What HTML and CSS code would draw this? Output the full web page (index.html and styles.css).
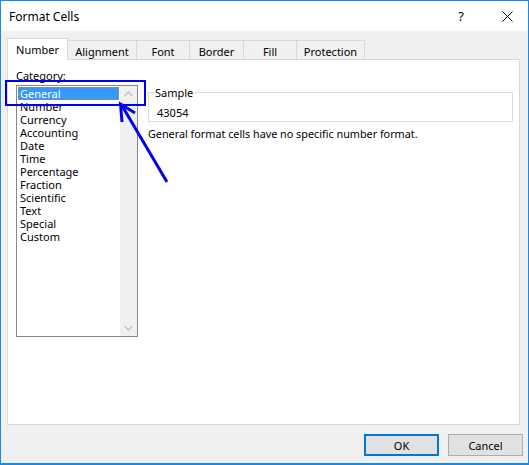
FILE: index.html
```html
<!DOCTYPE html>
<html>
<head>
<meta charset="utf-8">
<link rel="stylesheet" href="styles.css">
</head>
<body>
<div class="window">
  <div class="titlebar">
    <span class="title">Format Cells</span>
    <span class="help">?</span>
    <svg class="close" width="11" height="11" viewBox="0 0 11 11"><path d="M0.5 0.5 L10.5 10.5 M10.5 0.5 L0.5 10.5" stroke="#000" stroke-width="1" fill="none"/></svg>
  </div>
  <div class="body">
    <div class="tabs">
      <div class="tab active w-number">Number</div>
      <div class="tab w-align">Alignment</div>
      <div class="tab w-font">Font</div>
      <div class="tab w-border">Border</div>
      <div class="tab w-fill">Fill</div>
      <div class="tab w-prot">Protection</div>
    </div>
    <div class="panel">
      <div class="leftcol">
        <div class="label"><u>C</u>ategory:</div>
        <div class="listbox">
          <div class="items">
            <div class="item selected">General</div>
            <div class="item">Number</div>
            <div class="item">Currency</div>
            <div class="item">Accounting</div>
            <div class="item">Date</div>
            <div class="item">Time</div>
            <div class="item">Percentage</div>
            <div class="item">Fraction</div>
            <div class="item">Scientific</div>
            <div class="item">Text</div>
            <div class="item">Special</div>
            <div class="item">Custom</div>
          </div>
          <div class="scrollbar">
            <svg width="17" height="17" viewBox="0 0 17 17"><path d="M4.5 10 L8.5 6 L12.5 10" stroke="#c2c2c2" stroke-width="1.5" fill="none"/></svg>
            <svg width="17" height="17" viewBox="0 0 17 17"><path d="M4.5 7 L8.5 11 L12.5 7" stroke="#c2c2c2" stroke-width="1.5" fill="none"/></svg>
          </div>
        </div>
      </div>
      <div class="rightcol">
        <fieldset class="group">
          <legend>Sample</legend>
          <div class="sample">43054</div>
        </fieldset>
        <div class="desc">General format cells have no specific number format.</div>
      </div>
    </div>
    <div class="buttons">
      <button class="btn default">OK</button>
      <button class="btn">Cancel</button>
    </div>
  </div>
  <svg class="annot" width="529" height="465" viewBox="0 0 529 465">
    <rect x="6" y="81" width="139" height="24" fill="none" stroke="#0000f0" stroke-width="2"/>
    <path d="M167 182 L121 104" stroke="#0000f0" stroke-width="3" fill="none"/>
    <path d="M122 122 L120.5 104 L135 113" stroke="#0000f0" stroke-width="3" fill="none" stroke-linejoin="miter"/>
  </svg>
</div>
</body>
</html>
```
FILE: styles.css
```css
html, body {
  margin: 0;
  padding: 0;
  background: #fff;
}
body {
  font-family: "Noto Sans", "Open Sans", sans-serif;
  font-size: 11px;
  color: #000;
}
.window {
  position: relative;
  width: 529px;
  height: 465px;
  box-sizing: border-box;
  border: 1px solid #1a8ae6;
  border-bottom-width: 2px;
  background: #f0f0f0;
  display: flex;
  flex-direction: column;
}
.titlebar {
  height: 30px;
  background: #fff;
  display: flex;
  align-items: center;
  padding-left: 8px;
}
.title {
  font-size: 12px;
}
.help {
  margin-left: auto;
  font-size: 13px;
  margin-right: 38px;
}
.close {
  margin-right: 15px;
}
.body {
  padding: 7px 0 0 6px;
  display: flex;
  flex-direction: column;
}
.tabs {
  display: flex;
  align-items: flex-end;
  height: 21px;
  position: relative;
  z-index: 1;
}
.tab {
  box-sizing: border-box;
  height: 19px;
  border: 1px solid #d9d9d9;
  border-bottom: none;
  margin-left: -1px;
  display: flex;
  align-items: center;
  justify-content: center;
  padding-top: 2px;
  background: #f0f0f0;
}
.tab.active {
  height: 22px;
  margin-left: 0;
  background: #fff;
  margin-bottom: -1px;
  padding-top: 0;
}
.w-number { width: 61px; }
.w-align { width: 70px; }
.w-font { width: 54px; }
.w-border { width: 55px; }
.w-fill { width: 54px; }
.w-prot { width: 69px; }
.panel {
  box-sizing: border-box;
  width: 513px;
  height: 366px;
  border: 1px solid #d9d9d9;
  background: #fff;
  display: flex;
  padding: 8px 6px 0 8px;
  gap: 10px;
}
.label {
  line-height: 15px;
  margin-bottom: 2px;
}
.listbox {
  box-sizing: border-box;
  width: 122px;
  height: 252px;
  border: 1px solid #828790;
  display: flex;
}
.items {
  flex: 1;
  padding: 1px;
}
.item {
  height: 13px;
  line-height: 13px;
  padding-left: 2px;
  white-space: nowrap;
}
.item.selected {
  background: #3399ff;
  color: #fff;
  outline: 1px dotted #d08030;
  outline-offset: -1px;
}
.scrollbar {
  width: 17px;
  background: #f0f0f0;
  display: flex;
  flex-direction: column;
  justify-content: space-between;
}
.scrollbar svg { display: block; }
.rightcol {
  flex: 1;
  display: flex;
  flex-direction: column;
  padding-top: 17px;
}
.group {
  margin: 0;
  border: 1px solid #dcdcdc;
  padding: 5px 8px 1px 8px;
}
.group legend {
  padding: 0 1px;
  margin-left: -3px;
  line-height: 15px;
}
.sample {
  line-height: 15px;
}
.desc {
  margin-top: 4px;
  line-height: 15px;
  font-size: 10.8px;
}
.buttons {
  display: flex;
  justify-content: flex-end;
  gap: 9px;
  margin-top: 9px;
  padding-right: 5px;
}
.btn {
  box-sizing: border-box;
  width: 75px;
  height: 22px;
  font-family: inherit;
  font-size: 11px;
  background: #e1e1e1;
  border: 1px solid #adadad;
  padding: 0;
  color: #000;
}
.btn.default {
  border: 2px solid #0078d7;
}
.annot {
  position: absolute;
  left: -1px;
  top: -1px;
  pointer-events: none;
}
```
